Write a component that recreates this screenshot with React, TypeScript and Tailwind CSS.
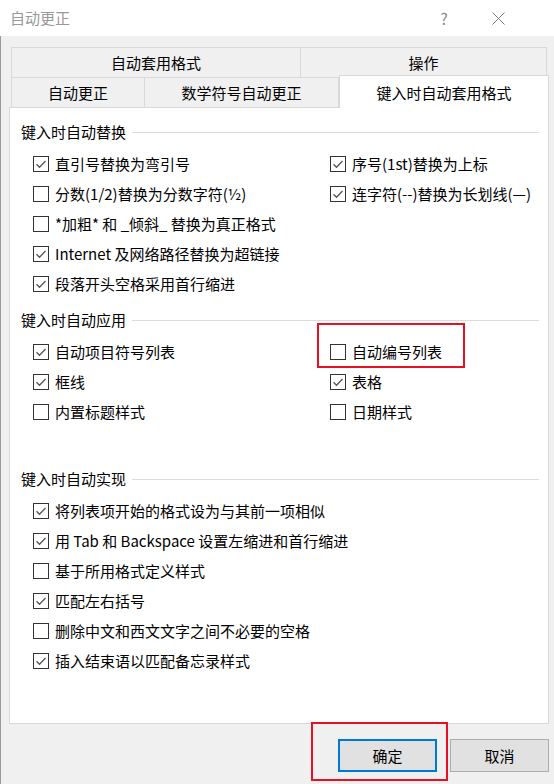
import { ReactNode } from 'react'

const font = { fontFamily: '"Noto Sans CJK SC", "Noto Sans", sans-serif' }

function CheckBox({ checked }: { checked: boolean }) {
  return (
    <span className="w-[16px] h-[16px] border border-[#333333] bg-white flex items-center justify-center shrink-0">
      {checked && (
        <svg width="12" height="12" viewBox="0 0 12 12">
          <path d="M1.5 6.2 L4.5 9.2 L10.5 3" fill="none" stroke="#555555" strokeWidth="1.3" />
        </svg>
      )}
    </span>
  )
}

function Option({ checked, children }: { checked: boolean; children: ReactNode }) {
  return (
    <div className="h-[30px] flex items-center gap-[6px] text-[15px] leading-[20px] text-black whitespace-nowrap">
      <CheckBox checked={checked} />
      <span>{children}</span>
    </div>
  )
}

function GroupHeader({ title }: { title: string }) {
  return (
    <div className="h-[20px] flex items-center text-[15px] leading-[20px] text-black">
      <span className="whitespace-nowrap">{title}</span>
      <div className="flex-1 h-px bg-[#dcdcdc] ml-[6px]" />
    </div>
  )
}

export default function App() {
  return (
    <div className="w-[554px] h-[784px] bg-[#f0f0f0] flex flex-col overflow-hidden" style={font}>
      {/* Title bar */}
      <div className="h-[36px] bg-white flex items-center pl-[10px] shrink-0">
        <span className="text-[15px] leading-[20px] text-[#999999]">自动更正</span>
        <span className="ml-auto text-[16px] text-[#8a8a8a] w-[14px] text-center mr-[41px]">?</span>
        <svg width="13" height="13" viewBox="0 0 13 13" className="mr-[49px]">
          <path d="M0.5 0.5 L12.5 12.5 M12.5 0.5 L0.5 12.5" stroke="#7a7a7a" strokeWidth="1" />
        </svg>
      </div>

      {/* Body */}
      <div className="flex-1 flex flex-col border-l border-[#9a9a9a]">
        {/* Tabs */}
        <div className="mt-[11px] ml-[10px] flex h-[30px] text-[15px] leading-[20px] text-black">
          <div className="w-[290px] border-t border-l border-r border-[#d9d9d9] flex items-center justify-center">自动套用格式</div>
          <div className="w-[246px] border-t border-r border-[#d9d9d9] flex items-center justify-center">操作</div>
        </div>
        <div className="ml-[10px] flex h-[30px] items-end text-[15px] leading-[20px] text-black">
          <div className="w-[134px] h-[30px] border-t border-l border-r border-[#d9d9d9] flex items-center justify-center">自动更正</div>
          <div className="w-[194px] h-[30px] border-t border-r border-[#d9d9d9] flex items-center justify-center">数学符号自动更正</div>
          <div className="relative z-10 w-[210px] h-[33px] -mb-px bg-white border-t border-l border-r border-[#d9d9d9] flex items-center justify-center pt-px">
            键入时自动套用格式
          </div>
        </div>

        {/* Panel */}
        <div className="ml-[8px] w-[540px] h-[617px] bg-white border border-[#d9d9d9] pl-[11px] pr-[9px] pt-[14px]">
          <GroupHeader title="键入时自动替换" />
          <div className="mt-[7px] ml-[12px] grid grid-cols-[297px_1fr]">
            <Option checked>直引号替换为弯引号</Option>
            <Option checked>序号(1st)替换为上标</Option>
            <Option checked={false}>分数(1/2)替换为分数字符(½)</Option>
            <Option checked>连字符(--)替换为长划线(—)</Option>
            <Option checked={false}>*加粗* 和 _倾斜_ 替换为真正格式</Option>
            <div />
            <Option checked>Internet 及网络路径替换为超链接</Option>
            <div />
            <Option checked>段落开头空格采用首行缩进</Option>
            <div />
          </div>

          <div className="mt-[11px]">
            <GroupHeader title="键入时自动应用" />
          </div>
          <div className="mt-[7px] ml-[12px] grid grid-cols-[297px_1fr]">
            <Option checked>自动项目符号列表</Option>
            <div className="relative">
              <Option checked={false}>自动编号列表</Option>
              <div className="absolute left-[-13px] top-[-14px] w-[148px] h-[45px] border-2 border-[#e81123]" />
            </div>
            <Option checked>框线</Option>
            <Option checked>表格</Option>
            <Option checked={false}>内置标题样式</Option>
            <Option checked={false}>日期样式</Option>
          </div>

          <div className="mt-[42px]">
            <GroupHeader title="键入时自动实现" />
          </div>
          <div className="mt-[7px] ml-[12px] flex flex-col">
            <Option checked>将列表项开始的格式设为与其前一项相似</Option>
            <Option checked>用 Tab 和 Backspace 设置左缩进和首行缩进</Option>
            <Option checked={false}>基于所用格式定义样式</Option>
            <Option checked>匹配左右括号</Option>
            <Option checked={false}>删除中文和西文文字之间不必要的空格</Option>
            <Option checked>插入结束语以匹配备忘录样式</Option>
          </div>
        </div>

        {/* Buttons */}
        <div className="mt-[15px] flex justify-end gap-[13px] pr-[5px]">
          <div className="relative">
            <button className="w-[99px] h-[33px] bg-[#e1e1e1] border-2 border-[#0078d7] text-[15px] leading-[20px] text-black">
              确定
            </button>
            <div className="absolute left-[-27px] top-[-17px] w-[137px] h-[59px] border-2 border-[#e81123]" />
          </div>
          <button className="w-[99px] h-[33px] bg-[#e1e1e1] border border-[#adadad] text-[15px] leading-[20px] text-black">
            取消
          </button>
        </div>
      </div>
    </div>
  )
}
